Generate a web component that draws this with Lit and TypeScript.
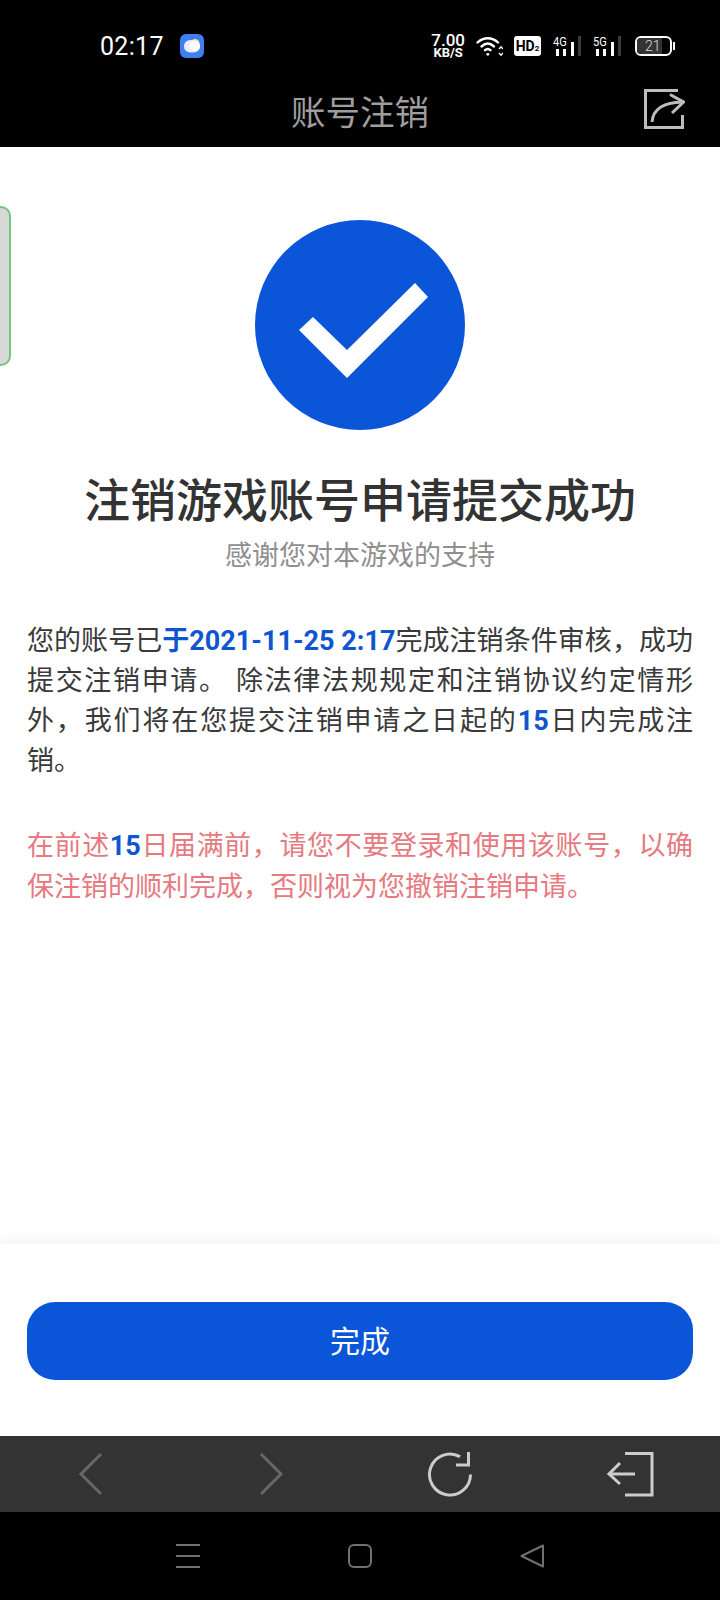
import { LitElement, css, html, svg } from "lit";
import { customElement } from "lit/decorators.js";

const signal = (label: string) => html`
  <span class="signal">
    <span class="sig-label">${label}</span>
    <svg width="28" height="20" viewBox="0 0 28 20">
      <rect x="3" y="13" width="3" height="7" fill="#fff"></rect>
      <rect x="10" y="13" width="3" height="7" fill="#fff"></rect>
      <rect x="18" y="6" width="3" height="14" fill="#fff"></rect>
      <rect x="25" y="0" width="3" height="20" fill="#3a3a3a"></rect>
    </svg>
  </span>
`;

const wifi = svg`
  <svg width="27" height="21" viewBox="0 0 27 21" fill="none" stroke="#fff" stroke-width="2.4" stroke-linecap="round">
    <path d="M1.5 6.5C7.5 .8 16 .8 22 6.5"></path>
    <path d="M5.5 10.5C9.5 6.8 14 6.8 18 10.5"></path>
    <path d="M9 14.2C10.8 12.6 12.7 12.6 14.5 14.2"></path>
    <circle cx="11.8" cy="18.3" r="1.4" fill="#fff" stroke="none"></circle>
    <path d="M23 13l2-2.2 2 2.2M23 17l2 2.2 2-2.2" stroke-width="1.4" stroke-linecap="butt"></path>
  </svg>
`;

@customElement("app-root")
export class AppRoot extends LitElement {
  render() {
    return html`
      <div class="top">
        <div class="status">
          <div class="status-left">
            <span class="time">02:17</span>
            <svg width="24" height="24" viewBox="0 0 24 24">
              <rect width="24" height="24" rx="6" fill="#3f7fef"></rect>
              <circle cx="15" cy="9.500" r="4.500" fill="#f0dc9a"></circle>
              <rect x="4" y="6" width="16" height="12.500" rx="6.250" fill="#e8eefc"></rect>
              <circle cx="15" cy="12" r="5" fill="#fff"></circle>
            </svg>
          </div>
          <div class="status-right">
            <span class="speed"><b>7.00</b><i>KB/S</i></span>
            ${wifi}
            <span class="hd">HD<small>2</small></span>
            ${signal("4G")} ${signal("5G")}
            <span class="battery"><span class="level">21</span></span>
          </div>
        </div>
        <div class="titlebar">
          <span>账号注销</span>
          <svg class="share" width="42" height="42" viewBox="0 0 42 42" fill="none" stroke="#bdbdbd" stroke-width="3">
            <path d="M35 2.500H2.500V39.500H39.500V27"></path>
            <path d="M9 34C10 22 18 14.500 40 14"></path>
            <path d="M27 6.500L40.500 14L29 25"></path>
          </svg>
        </div>
      </div>

      <div class="main">
        <div class="side-tab"></div>
        <svg class="check" width="210" height="210" viewBox="0 0 210 210">
          <circle cx="105" cy="105" r="105" fill="#0b55d9"></circle>
          <path d="M44 110L58 97L92 130L160 63L173 77L92 158Z" fill="#fff"></path>
        </svg>
        <h1>注销游戏账号申请提交成功</h1>
        <p class="sub">感谢您对本游戏的支持</p>
        <p class="body">您的账号已<b>于2021-11-25 2:17</b>完成注销条件审核，成功提交注销申请。 除法律法规规定和注销协议约定情形外，我们将在您提交注销申请之日起的<b>15</b>日内完成注销。</p>
        <p class="warn">在前述<b>15</b>日届满前，请您不要登录和使用该账号，以确保注销的顺利完成，否则视为您撤销注销申请。</p>
      </div>

      <div class="footer">
        <button>完成</button>
      </div>

      <div class="toolbar">
        <svg width="46" height="46" viewBox="0 0 46 46" fill="none" stroke="#666" stroke-width="3">
          <path d="M34 3L14 23L34 43"></path>
        </svg>
        <svg width="46" height="46" viewBox="0 0 46 46" fill="none" stroke="#666" stroke-width="3">
          <path d="M14 3L34 23L14 43"></path>
        </svg>
        <svg width="46" height="46" viewBox="0 0 46 46" fill="none" stroke="#ccc" stroke-width="3">
          <path d="M43.500 23.500A20.500 20.500 0 1 1 33 5.600"></path>
          <path d="M41.500 1V14H29"></path>
        </svg>
        <svg width="48" height="46" viewBox="0 0 48 46" fill="none" stroke="#ccc" stroke-width="3">
          <path d="M19 2.500H46V44H19"></path>
          <path d="M29 23H3"></path>
          <path d="M14 12L3 23L14 33"></path>
        </svg>
      </div>

      <div class="nav">
        <svg width="24" height="24" viewBox="0 0 24 24" stroke="#707070" stroke-width="2">
          <path d="M0 1H24M0 12H24M0 23H24"></path>
        </svg>
        <svg width="24" height="24" viewBox="0 0 24 24" fill="none" stroke="#707070" stroke-width="2">
          <rect x="1" y="1" width="22" height="22" rx="5"></rect>
        </svg>
        <svg width="24" height="24" viewBox="0 0 24 24" fill="none" stroke="#707070" stroke-width="2" stroke-linejoin="round">
          <path d="M23 1.500V22.500L1.500 12Z"></path>
        </svg>
      </div>
    `;
  }

  static styles = css`
    :host {
      display: flex;
      flex-direction: column;
      height: 1600px;
      width: 720px;
      background: #fff;
      font-family: "Roboto", "Noto Sans CJK SC", sans-serif;
      overflow: hidden;
    }

    .top {
      background: #000;
      height: 147px;
      flex: none;
    }
    .status {
      height: 92px;
      display: flex;
      justify-content: space-between;
      align-items: center;
      padding: 0 48px 0 100px;
      box-sizing: border-box;
    }
    .status-left {
      display: flex;
      align-items: center;
      gap: 16px;
    }
    .time {
      color: #fff;
      font-size: 25px;
      letter-spacing: 0.3px;
    }
    .status-right {
      display: flex;
      align-items: center;
      gap: 11px;
      color: #fff;
    }
    .speed {
      display: flex;
      flex-direction: column;
      align-items: center;
      line-height: 1;
    }
    .speed b {
      font-size: 17px;
      font-weight: 500;
      line-height: 14px;
    }
    .speed i {
      font-size: 13px;
      font-style: normal;
      font-weight: 700;
      line-height: 12px;
    }
    .hd {
      background: #fff;
      color: #000;
      border-radius: 3px;
      width: 27px;
      height: 20px;
      font-size: 14px;
      font-weight: 700;
      line-height: 20px;
      text-align: center;
    }
    .hd small {
      font-size: 8px;
    }
    .signal {
      position: relative;
      display: block;
      width: 28px;
      height: 20px;
      margin-left: 1px;
    }
    .sig-label {
      position: absolute;
      left: 0;
      top: 0;
      font-size: 13px;
      line-height: 12px;
      transform: scaleX(0.85);
      transform-origin: left center;
    }
    .signal svg {
      display: block;
    }
    .battery {
      width: 37px;
      height: 20px;
      border: 2px solid #fff;
      border-radius: 6px;
      box-sizing: border-box;
      position: relative;
      display: block;
      margin-left: 3px;
    }
    .battery::after {
      content: "";
      position: absolute;
      right: -5px;
      top: 4px;
      width: 2px;
      height: 8px;
      background: #fff;
    }
    .level {
      display: block;
      width: 25px;
      height: 16px;
      background: #333;
      border-radius: 4px 0 0 4px;
      font-size: 14px;
      font-weight: 300;
      line-height: 16px;
      padding-left: 8px;
      box-sizing: border-box;
      white-space: nowrap;
      color: #ddd;
    }

    .titlebar {
      position: relative;
      height: 36px;
      display: flex;
      align-items: center;
      justify-content: center;
      color: #9e9e9e;
      font-size: 34.500px;
    }
    .share {
      position: absolute;
      right: 35px;
      top: -4px;
    }

    .main {
      flex: 1;
      position: relative;
      display: flex;
      flex-direction: column;
      align-items: center;
      padding: 73px 27px 0;
      min-height: 0;
    }
    .side-tab {
      position: absolute;
      left: -13px;
      top: 59px;
      width: 24px;
      height: 160px;
      box-sizing: border-box;
      background: #d8d8d8;
      border: 2px solid #6fc77b;
      border-radius: 10px;
    }
    .check {
      flex: none;
      display: block;
    }
    h1 {
      margin: 44px 0 0;
      font-size: 46px;
      line-height: 54px;
      font-weight: 500;
      color: #333;
      white-space: nowrap;
    }
    .sub {
      margin: 8px 0 0;
      font-size: 27px;
      line-height: 40px;
      color: #8f8f8f;
    }
    .body,
    .warn {
      align-self: stretch;
      margin: 0;
      font-size: 27px;
      line-height: 40px;
      text-align: justify;
    }
    .body {
      margin-top: 45px;
      color: #3a3a3a;
    }
    .body b,
    .warn b {
      color: #0f55d0;
    }
    .warn {
      margin-top: 45px;
      color: #e67a80;
      line-height: 41px;
    }

    .footer {
      flex: none;
      position: relative;
      height: 192px;
      padding: 58px 27px 0;
      box-sizing: border-box;
      background: #fff;
      box-shadow: 0 -5px 12px rgba(0, 0, 0, 0.05);
    }
    button {
      display: block;
      width: 100%;
      height: 78px;
      border: none;
      border-radius: 28px;
      background: #0b55d9;
      color: #fff;
      font-family: inherit;
      font-size: 30px;
      padding: 0 0 4px;
    }

    .toolbar {
      flex: none;
      position: relative;
      height: 76px;
      background: #333;
      display: grid;
      grid-template-columns: repeat(4, 180px);
      justify-items: center;
      align-items: center;
    }
    .nav {
      flex: none;
      height: 88px;
      background: #000;
      display: flex;
      justify-content: center;
      align-items: center;
      gap: 148px;
    }
  `;
}
